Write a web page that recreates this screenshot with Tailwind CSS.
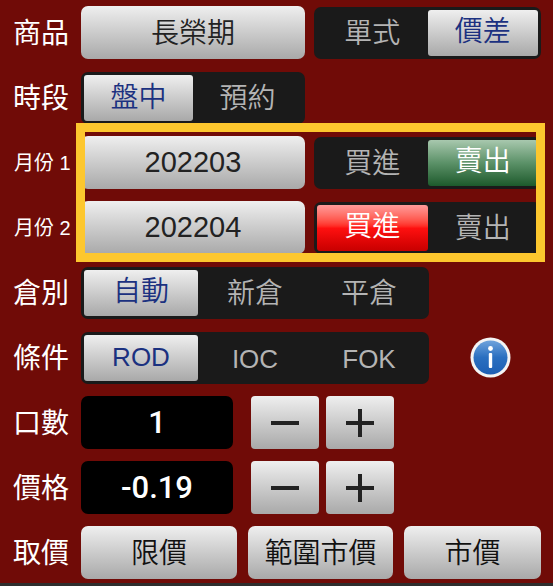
<!DOCTYPE html>
<html lang="zh-Hant">
<head>
    <meta charset="UTF-8">
    <meta name="viewport" content="width=device-width, initial-scale=1">
    <title>下單</title>
    <script src="https://cdn.jsdelivr.net/npm/@tailwindcss/browser@4"></script>
</head>
<body class="bg-[#700b07] font-[350] font-['Liberation_Sans','Noto_Sans_CJK_TC',sans-serif]">
<div class="relative w-[553px] h-[586px] overflow-hidden pt-[6px]">

    <!-- 商品 -->
    <div class="flex items-center h-[53px]">
        <div class="w-[81px] pl-[13px] pt-[2px] text-[28px] font-normal leading-none text-white">商品</div>
        <button class="w-[224px] h-[53px] pt-[2px] rounded-[7px] bg-linear-to-b from-[#efefef] to-[#a9a9a9] text-[28px] text-[#222]">長榮期</button>
        <div class="ml-[9px] w-[227px] h-[52px] rounded-[7px] bg-[#1a1a1a] flex items-center px-[3px] text-[28px]">
            <span class="w-[111px] pt-[3px] text-center text-[#b4b4b4]">單式</span>
            <span class="w-[111px] h-[46px] leading-[44px] rounded-[3px] text-center bg-linear-to-b from-[#efefef] to-[#a9a9a9] text-[#1b3180]">價差</span>
        </div>
    </div>

    <!-- 時段 -->
    <div class="flex items-center h-[53px] mt-[12px]">
        <div class="w-[81px] pl-[13px] pt-[2px] text-[28px] font-normal leading-none text-white">時段</div>
        <div class="w-[224px] h-[52px] rounded-[7px] bg-[#1a1a1a] flex items-center px-[3px] text-[28px]">
            <span class="w-[109px] h-[46px] leading-[45px] rounded-[3px] text-center bg-linear-to-b from-[#efefef] to-[#a9a9a9] text-[#1b3180]">盤中</span>
            <span class="flex-1 pt-[3px] text-center text-[#b4b4b4]">預約</span>
        </div>
    </div>

    <!-- 月份1 -->
    <div class="flex items-center h-[53px] mt-[12px]">
        <div class="w-[81px] pl-[14px] text-[20px] font-normal leading-none text-white">月份 1</div>
        <button class="w-[224px] h-[53px] rounded-[7px] bg-linear-to-b from-[#efefef] to-[#a9a9a9] text-[29px] text-[#222]">202203</button>
        <div class="ml-[9px] w-[227px] h-[52px] rounded-[7px] bg-[#1a1a1a] flex items-center px-[3px] text-[28px]">
            <span class="w-[111px] pt-[3px] text-center text-[#b4b4b4]">買進</span>
            <span class="w-[111px] h-[46px] leading-[44px] rounded-[3px] text-center bg-linear-to-b from-[#a8c8ae] via-[#5b9168] to-[#1c5a2c] text-white">賣出</span>
        </div>
    </div>

    <!-- 月份2 -->
    <div class="flex items-center h-[53px] mt-[12px]">
        <div class="w-[81px] pl-[14px] text-[20px] font-normal leading-none text-white">月份 2</div>
        <button class="w-[224px] h-[53px] rounded-[7px] bg-linear-to-b from-[#efefef] to-[#a9a9a9] text-[29px] text-[#222]">202204</button>
        <div class="ml-[9px] w-[227px] h-[52px] rounded-[7px] bg-[#1a1a1a] flex items-center px-[3px] text-[28px]">
            <span class="w-[111px] h-[46px] leading-[44px] rounded-[3px] text-center bg-linear-to-b from-[#ff9a9a] via-[#ff1010] to-[#c80000] text-white">買進</span>
            <span class="w-[111px] pt-[3px] text-center text-[#b4b4b4]">賣出</span>
        </div>
    </div>

    <!-- 倉別 -->
    <div class="flex items-center h-[53px] mt-[12px]">
        <div class="w-[81px] pl-[13px] pt-[2px] text-[28px] font-normal leading-none text-white">倉別</div>
        <div class="w-[348px] h-[52px] rounded-[7px] bg-[#1a1a1a] flex items-center px-[3px] text-[28px]">
            <span class="w-[114px] h-[46px] leading-[44px] rounded-[3px] text-center bg-linear-to-b from-[#efefef] to-[#a9a9a9] text-[#1b3180]">自動</span>
            <span class="w-[114px] pt-[3px] text-center text-[#b4b4b4]">新倉</span>
            <span class="w-[114px] pt-[3px] text-center text-[#b4b4b4]">平倉</span>
        </div>
    </div>

    <!-- 條件 -->
    <div class="flex items-center h-[53px] mt-[12px]">
        <div class="w-[81px] pl-[13px] pt-[2px] text-[28px] font-normal leading-none text-white">條件</div>
        <div class="w-[348px] h-[52px] rounded-[7px] bg-[#1a1a1a] flex items-center px-[3px] text-[26px]">
            <span class="w-[114px] h-[46px] leading-[44px] rounded-[3px] text-center bg-linear-to-b from-[#efefef] to-[#a9a9a9] text-[#1b3180]">ROD</span>
            <span class="w-[114px] pt-[3px] text-center text-[#b4b4b4]">IOC</span>
            <span class="w-[114px] pt-[3px] text-center text-[#b4b4b4]">FOK</span>
        </div>
        <svg class="ml-[41px]" width="41" height="41" viewBox="0 0 41 41">
            <defs>
                <linearGradient id="infoBlue" x1="0" y1="0" x2="0" y2="1">
                    <stop offset="0" stop-color="#6fa3dc"/>
                    <stop offset="0.5" stop-color="#2a6fc0"/>
                    <stop offset="1" stop-color="#1d5fb4"/>
                </linearGradient>
            </defs>
            <circle cx="20.5" cy="20.5" r="20" fill="#f4f4f4"/>
            <circle cx="20.5" cy="20.5" r="17" fill="url(#infoBlue)"/>
            <circle cx="20.5" cy="11.5" r="2.4" fill="#fff"/>
            <rect x="18.8" y="16" width="3.4" height="15" rx="1" fill="#fff"/>
        </svg>
    </div>

    <!-- 口數 -->
    <div class="flex items-center h-[53px] mt-[12px]">
        <div class="w-[81px] pl-[13px] pt-[2px] text-[28px] font-normal leading-none text-white">口數</div>
        <div class="w-[152px] h-[53px] rounded-[7px] bg-black text-white text-center font-['Roboto',sans-serif] text-[31px] font-medium leading-[53px]">1</div>
        <button class="ml-[18px] w-[68px] h-[53px] rounded-[4px] bg-linear-to-b from-[#efefef] to-[#a9a9a9] flex items-center justify-center">
            <svg width="28" height="6" viewBox="0 0 28 6"><rect x="0" y="1" width="28" height="4" fill="#222"/></svg>
        </button>
        <button class="ml-[7px] w-[68px] h-[53px] rounded-[4px] bg-linear-to-b from-[#efefef] to-[#a9a9a9] flex items-center justify-center">
            <svg width="28" height="28" viewBox="0 0 28 28"><path d="M0 12h12V0h4v12h12v4H16v12h-4V16H0z" fill="#222"/></svg>
        </button>
    </div>

    <!-- 價格 -->
    <div class="flex items-center h-[53px] mt-[12px]">
        <div class="w-[81px] pl-[13px] pt-[2px] text-[28px] font-normal leading-none text-white">價格</div>
        <div class="w-[152px] h-[53px] rounded-[7px] bg-black text-white text-center font-['Roboto',sans-serif] text-[31px] font-medium leading-[53px]">-0.19</div>
        <button class="ml-[18px] w-[68px] h-[53px] rounded-[4px] bg-linear-to-b from-[#efefef] to-[#a9a9a9] flex items-center justify-center">
            <svg width="28" height="6" viewBox="0 0 28 6"><rect x="0" y="1" width="28" height="4" fill="#222"/></svg>
        </button>
        <button class="ml-[7px] w-[68px] h-[53px] rounded-[4px] bg-linear-to-b from-[#efefef] to-[#a9a9a9] flex items-center justify-center">
            <svg width="28" height="28" viewBox="0 0 28 28"><path d="M0 12h12V0h4v12h12v4H16v12h-4V16H0z" fill="#222"/></svg>
        </button>
    </div>

    <!-- 取價 -->
    <div class="flex items-center h-[53px] mt-[12px]">
        <div class="w-[81px] pl-[13px] pt-[2px] text-[28px] font-normal leading-none text-white">取價</div>
        <button class="w-[156px] h-[53px] pt-[2px] rounded-[7px] bg-linear-to-b from-[#efefef] to-[#a9a9a9] text-[28px] text-[#111]">限價</button>
        <button class="ml-[11px] w-[145px] h-[53px] pt-[2px] rounded-[7px] bg-linear-to-b from-[#efefef] to-[#a9a9a9] text-[28px] text-[#111]">範圍市價</button>
        <button class="ml-[11px] w-[137px] h-[53px] pt-[2px] rounded-[7px] bg-linear-to-b from-[#efefef] to-[#a9a9a9] text-[28px] text-[#111]">市價</button>
    </div>

    <!-- 底部 -->
    <div class="h-[4px] mt-[4px] bg-[#2e2e2e]"></div>

    <!-- 黃色標示框 -->
    <div class="absolute left-[76px] top-[123px] w-[469px] h-[139px] border-[9px] border-[#fdc72e]"></div>
</div>
</body>
</html>
